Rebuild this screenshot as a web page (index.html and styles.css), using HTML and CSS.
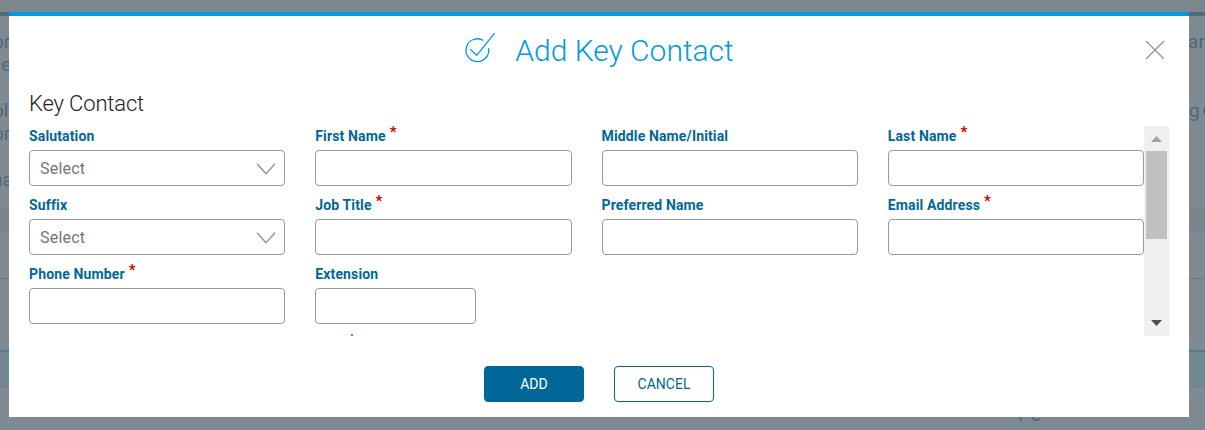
FILE: index.html
```html
<!DOCTYPE html>
<html lang="en">
<head>
  <meta charset="UTF-8" />
  <title>Add Key Contact</title>
  <link rel="stylesheet" href="styles.css">
</head>
<body>
  <div class="page">
    <div class="page-top"></div>
    <div class="page-text">
      <p><span>or</span><span class="right">ar</span></p>
      <p><span class="second">e</span></p>
      <p class="para"><span>ol</span><span class="right-g">g C</span></p>
      <p><span>or</span></p>
      <p class="para"><span class="na">na</span></p>
    </div>
    <div class="page-band"></div>
    <div class="page-row"></div>
    <div class="page-row blue"></div>
    <div class="page-head"></div>
    <div class="page-foot">Pe</div>
  </div>

  <div class="modal">
    <div class="modal-header">
      <svg class="check-icon" width="34" height="34" viewBox="0 0 34 34">
        <path d="M19.4 8.5A11.4 11.4 0 1 0 24.6 16.1M6.2 17.1L12.7 23.3L30.6 1.2" />
      </svg>
      <h1>Add Key Contact</h1>
      <button class="close" aria-label="Close">
        <svg width="18" height="18" viewBox="0 0 18 18"><path d="M0 0L18 18M18 0L0 18" /></svg>
      </button>
    </div>
    <h2>Key Contact</h2>
    <div class="form-area">
      <div class="form-grid">
        <div class="field">
          <label>Salutation</label>
          <div class="select">Select
            <svg width="20" height="12" viewBox="0 0 20 12"><path d="M1 .7L10 10.7L19 .7" /></svg>
          </div>
        </div>
        <div class="field"><label>First Name<sup>*</sup></label><input type="text"></div>
        <div class="field"><label>Middle Name/Initial</label><input type="text"></div>
        <div class="field"><label>Last Name<sup>*</sup></label><input type="text"></div>
        <div class="field">
          <label>Suffix</label>
          <div class="select">Select
            <svg width="20" height="12" viewBox="0 0 20 12"><path d="M1 .7L10 10.7L19 .7" /></svg>
          </div>
        </div>
        <div class="field"><label>Job Title<sup>*</sup></label><input type="text"></div>
        <div class="field"><label>Preferred Name</label><input type="text"></div>
        <div class="field"><label>Email Address<sup>*</sup></label><input type="text"></div>
        <div class="field"><label>Phone Number<sup>*</sup></label><input type="text"></div>
        <div class="field"><label>Extension</label><input class="short" type="text"></div>
        <div class="field"></div>
        <div class="field"></div>
        <div class="field"></div>
        <div class="field last"><label>City<sup>*</sup></label><input type="text"></div>
      </div>
      <div class="scrollbar">
        <svg class="up" width="11" height="6" viewBox="0 0 11 6"><path d="M0 6L5.5 0L11 6Z" /></svg>
        <div class="thumb"></div>
        <svg class="down" width="11" height="6" viewBox="0 0 11 6"><path d="M0 0L5.5 6L11 0Z" /></svg>
      </div>
    </div>
    <div class="modal-footer">
      <button class="btn primary">ADD</button>
      <button class="btn">CANCEL</button>
    </div>
  </div>
</body>
</html>
```
FILE: styles.css
```css
* { box-sizing: border-box; }
body { margin: 0; height: 430px; overflow: hidden; position: relative; font-family: Roboto, sans-serif; background: #808a92; }

/* dimmed page behind the dialog */
.page { height: 430px; overflow: hidden; color: #4c687a; font-size: 19px; font-weight: 400; }
.page-top { height: 16px; background: #7d868d; border-bottom: 4px solid #50697b; }
.page-text { height: 191px; padding-top: 14px; }
.page-text p { display: flex; justify-content: space-between; margin: 0 0 0 -7px; height: 23px; line-height: 23px; white-space: nowrap; }
.page-text .para { margin-top: 23px; }
.page-text .second { margin-left: 8px; }
.page-text .na { margin-left: -1px; }
.page-text .right { width: 17px; }
.page-text .right-g { width: 16px; word-spacing: -2px; }
.page-band { height: 25px; background: #7b848b; }
.page-row { height: 47px; border-bottom: 1px solid #6c7780; }
.page-row.blue { height: 73px; border-bottom: 2px solid #4d7b96; }
.page-head { height: 36px; background: #74868f; }
.page-foot { padding: 15px 0 0 1018px; line-height: 22px; font-size: 20px; }

.modal { position: absolute; top: 12px; left: 9px; width: 1180px; height: 405px; padding: 0 20px; background: #fff; border-top: 4px solid #009bdf; }
.modal-header { display: flex; height: 70px; align-items: center; justify-content: center; position: relative; }
.check-icon { margin: 0 17px 4px 0; fill: none; stroke: #009bdf; stroke-width: 1.3; }
.modal-header h1 { margin: 0; font-size: 30px; line-height: 36px; font-weight: 300; color: #009bdf; }
.close { position: absolute; top: 25px; right: 5px; padding: 0; border: 0; background: none; line-height: 0; }
.close svg { fill: none; stroke: #949494; stroke-width: 1.3; }
.modal h2 { margin: 0; height: 40px; padding-top: 4px; line-height: 28px; font-size: 22px; letter-spacing: -0.15px; font-weight: 300; color: #222; }

.form-area { display: flex; height: 210px; overflow: hidden; }
.form-grid { display: grid; width: 1115px; grid-template-columns: repeat(4, 1fr); gap: 9px 30px; align-content: start; }
.field { height: 60px; }
.field label { display: block; height: 24px; line-height: 21px; font-size: 14px; letter-spacing: 0.14px; font-weight: 700; color: #006798; white-space: nowrap; }
.field sup { margin-left: 4px; font-size: 15px; line-height: 0; vertical-align: 4px; color: #c00; }
.field.last sup { margin-left: 8px; vertical-align: 3px; }
.field input, .select { display: block; width: 100%; height: 36px; border: 1px solid #999; border-radius: 4px; background: #fff; }
.field .short { width: 161px; }
.select { display: flex; align-items: center; justify-content: space-between; padding: 1px 8px 0 10px; font-size: 16px; letter-spacing: 0.2px; color: #757575; }
.select svg { fill: none; stroke: #8b979f; stroke-width: 1.4; }

.scrollbar { display: flex; flex-direction: column; align-items: center; width: 25px; height: 210px; background: #f0f0f0; }
.up { margin: 10px 0 9px; fill: #a3a3a3; }
.thumb { width: 21px; height: 88px; background: #c0c0c0; }
.down { margin: auto 0 10px; fill: #505050; }

.modal-footer { display: flex; justify-content: center; gap: 30px; padding-top: 30px; }
.btn { width: 100px; height: 36px; padding: 0; border: 1px solid #006798; border-radius: 4px; background: #fff; color: #006798; font: 400 14px Roboto, sans-serif; }
.btn.primary { background: #006798; color: #fff; }
```
